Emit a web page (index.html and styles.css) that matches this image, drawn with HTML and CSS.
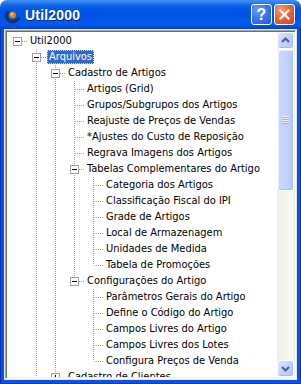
FILE: index.html
```html
<!DOCTYPE html>
<html lang="pt">
<head>
<meta charset="utf-8">
<title>Util2000</title>
<link rel="stylesheet" href="styles.css">
</head>
<body>
<div class="window">
  <div class="titlebar">
    <svg class="appicon" width="16" height="16" viewBox="0 0 16 16" aria-hidden="true">
      <path d="M3.2 4.4 A6 6 0 1 0 14.2 10.6" fill="none" stroke="#1b2f6b" stroke-width="3.2" stroke-linecap="round"/>
      <circle cx="8.6" cy="7" r="3.2" fill="#ef8618"/>
      <circle cx="7.7" cy="6.1" r="1.2" fill="#ffc978"/>
    </svg>
    <span class="title">Util2000</span>
    <span class="capbtn help">?</span>
    <span class="capbtn close">
      <svg width="19" height="19" viewBox="0 0 19 19" aria-hidden="true">
        <path d="M5.5 5.5 L13.5 13.5 M13.5 5.5 L5.5 13.5" stroke="#fff" stroke-width="2.2" stroke-linecap="square"/>
      </svg>
    </span>
  </div>
  <div class="frame">
    <div class="client">
      <div class="tree">
        <div class="rows">
          <div class="row"><span class="c solo"><span class="box"></span></span><span class="lbl">Util2000</span></div>
          <div class="row"><span class="g"></span><span class="c tee"><span class="box"></span></span><span class="lbl sel">Arquivos</span></div>
          <div class="row"><span class="g"></span><span class="g v"></span><span class="c tee"><span class="box"></span></span><span class="lbl">Cadastro de Artigos</span></div>
          <div class="row"><span class="g"></span><span class="g v"></span><span class="g v"></span><span class="c tee"></span><span class="lbl">Artigos (Grid)</span></div>
          <div class="row"><span class="g"></span><span class="g v"></span><span class="g v"></span><span class="c tee"></span><span class="lbl">Grupos/Subgrupos dos Artigos</span></div>
          <div class="row"><span class="g"></span><span class="g v"></span><span class="g v"></span><span class="c tee"></span><span class="lbl">Reajuste de Preços de Vendas</span></div>
          <div class="row"><span class="g"></span><span class="g v"></span><span class="g v"></span><span class="c tee"></span><span class="lbl">*Ajustes do Custo de Reposição</span></div>
          <div class="row"><span class="g"></span><span class="g v"></span><span class="g v"></span><span class="c tee"></span><span class="lbl">Regrava Imagens dos Artigos</span></div>
          <div class="row"><span class="g"></span><span class="g v"></span><span class="g v"></span><span class="c tee"><span class="box"></span></span><span class="lbl">Tabelas Complementares do Artigo</span></div>
          <div class="row"><span class="g"></span><span class="g v"></span><span class="g v"></span><span class="g v"></span><span class="c tee"></span><span class="lbl">Categoria dos Artigos</span></div>
          <div class="row"><span class="g"></span><span class="g v"></span><span class="g v"></span><span class="g v"></span><span class="c tee"></span><span class="lbl">Classificação Fiscal do IPI</span></div>
          <div class="row"><span class="g"></span><span class="g v"></span><span class="g v"></span><span class="g v"></span><span class="c tee"></span><span class="lbl">Grade de Artigos</span></div>
          <div class="row"><span class="g"></span><span class="g v"></span><span class="g v"></span><span class="g v"></span><span class="c tee"></span><span class="lbl">Local de Armazenagem</span></div>
          <div class="row"><span class="g"></span><span class="g v"></span><span class="g v"></span><span class="g v"></span><span class="c tee"></span><span class="lbl">Unidades de Medida</span></div>
          <div class="row"><span class="g"></span><span class="g v"></span><span class="g v"></span><span class="g v"></span><span class="c end"></span><span class="lbl">Tabela de Promoções</span></div>
          <div class="row"><span class="g"></span><span class="g v"></span><span class="g v"></span><span class="c end"><span class="box"></span></span><span class="lbl">Configurações do Artigo</span></div>
          <div class="row"><span class="g"></span><span class="g v"></span><span class="g v"></span><span class="g"></span><span class="c tee"></span><span class="lbl">Parâmetros Gerais do Artigo</span></div>
          <div class="row"><span class="g"></span><span class="g v"></span><span class="g v"></span><span class="g"></span><span class="c tee"></span><span class="lbl">Define o Código do Artigo</span></div>
          <div class="row"><span class="g"></span><span class="g v"></span><span class="g v"></span><span class="g"></span><span class="c tee"></span><span class="lbl">Campos Livres do Artigo</span></div>
          <div class="row"><span class="g"></span><span class="g v"></span><span class="g v"></span><span class="g"></span><span class="c tee"></span><span class="lbl">Campos Livres dos Lotes</span></div>
          <div class="row"><span class="g"></span><span class="g v"></span><span class="g v"></span><span class="g"></span><span class="c end"></span><span class="lbl">Configura Preços de Venda</span></div>
          <div class="row"><span class="g"></span><span class="g v"></span><span class="c tee"><span class="box plus"></span></span><span class="lbl">Cadastro de Clientes</span></div>
        </div>
        <div class="vscroll">
          <div class="sbtn">
            <svg width="15" height="15" viewBox="0 0 15 15" aria-hidden="true"><path d="M4 9 L7.5 5.5 L11 9" fill="none" stroke="#4d6185" stroke-width="2"/></svg>
          </div>
          <div class="track">
            <div class="thumb"><span class="grip"></span></div>
          </div>
          <div class="sbtn">
            <svg width="15" height="15" viewBox="0 0 15 15" aria-hidden="true"><path d="M4 6 L7.5 9.5 L11 6" fill="none" stroke="#4d6185" stroke-width="2"/></svg>
          </div>
        </div>
      </div>
    </div>
  </div>
</div>
</body>
</html>
```

FILE: styles.css
```css
html, body {
  margin: 0;
  padding: 0;
  background: #ffffff;
}

.window {
  width: 301px;
  height: 384px;
  display: flex;
  flex-direction: column;
  font-family: "DejaVu Sans Condensed", "Liberation Sans", sans-serif;
  font-size: 11px;
}

/* ---------- title bar ---------- */
.titlebar {
  flex: none;
  height: 29px;
  display: flex;
  align-items: center;
  padding: 0 6px 0 4px;
  border-radius: 7px 7px 0 0;
  background: linear-gradient(to bottom,
    #3d8ef5 0px, #3284f2 2px, #1068e6 5px, #0058e6 9px,
    #0054e3 15px, #0057e8 20px, #005cef 24px, #0049d6 27px, #003fc2 29px);
}

.appicon {
  flex: none;
  margin-top: 2px;
}

.title {
  margin-left: 5px;
  color: #ffffff;
  font-family: "Liberation Sans", "DejaVu Sans", sans-serif;
  font-weight: bold;
  font-size: 14px;
  letter-spacing: 0.2px;
  text-shadow: 1px 1px 0 #0a2a8c;
}

.capbtn {
  flex: none;
  width: 21px;
  height: 21px;
  box-sizing: border-box;
  border: 1px solid #ffffff;
  border-radius: 3px;
  display: flex;
  align-items: center;
  justify-content: center;
  color: #ffffff;
}

.help {
  margin-left: auto;
  font-family: "Liberation Sans", sans-serif;
  font-weight: bold;
  font-size: 16px;
  line-height: 19px;
  background: radial-gradient(circle at 30% 25%, #6a9cf7 0%, #3a76ee 45%, #1f5ddc 100%);
}

.close {
  margin-left: 2px;
  background: radial-gradient(circle at 30% 25%, #f29c7e 0%, #e4643f 45%, #cc4520 100%);
}

/* ---------- frame / client ---------- */
.frame {
  flex: 1;
  display: flex;
  min-height: 0;
  background: #0855dd;
  padding: 0 3px 3px;
  border: 1px solid #0031b8;
  border-top: none;
}

.client {
  flex: 1;
  display: flex;
  min-height: 0;
  background: #ece9d8;
  padding: 1px;
}

.tree {
  flex: 1;
  display: flex;
  min-height: 0;
  padding: 1px;
  border: 1px solid;
  border-color: #aca899 #ffffff #ffffff #aca899;
  box-shadow: inset 1px 1px 0 #716f64, inset -1px -1px 0 #f1efe2;
}

.rows {
  flex: 1;
  min-width: 0;
  overflow: hidden;
  background: #ffffff;
  padding-top: 1px;
}

/* ---------- tree rows ---------- */
.row {
  display: flex;
  height: 16px;
  white-space: nowrap;
  color: #000000;
}

.g {
  flex: none;
  width: 19px;
  height: 16px;
}

.g.v {
  background: repeating-linear-gradient(to bottom, #a0a0a0 0 1px, transparent 1px 2px) 10px 0 / 1px 16px no-repeat;
}

.c {
  flex: none;
  width: 21px;
  height: 16px;
  background:
    repeating-linear-gradient(to right, #a0a0a0 0 1px, transparent 1px 2px) 11px 8px / 10px 1px no-repeat;
}

.c.tee {
  background:
    repeating-linear-gradient(to right, #a0a0a0 0 1px, transparent 1px 2px) 11px 8px / 10px 1px no-repeat,
    repeating-linear-gradient(to bottom, #a0a0a0 0 1px, transparent 1px 2px) 10px 0 / 1px 16px no-repeat;
}

.c.end {
  background:
    repeating-linear-gradient(to right, #a0a0a0 0 1px, transparent 1px 2px) 11px 8px / 10px 1px no-repeat,
    repeating-linear-gradient(to bottom, #a0a0a0 0 1px, transparent 1px 2px) 10px 0 / 1px 8px no-repeat;
}

.box {
  display: block;
  width: 9px;
  height: 9px;
  box-sizing: border-box;
  margin: 4px 0 0 6px;
  border: 1px solid #a0a0a0;
  background:
    linear-gradient(#000000, #000000) 1px 3px / 5px 1px no-repeat,
    #ffffff;
}

.box.plus {
  background:
    linear-gradient(#000000, #000000) 1px 3px / 5px 1px no-repeat,
    linear-gradient(#000000, #000000) 3px 1px / 1px 5px no-repeat,
    #ffffff;
}

.lbl {
  flex: none;
  margin-top: 1px;
  height: 14px;
  line-height: 14px;
  padding: 0 2px;
}

.sel {
  background: #316ac5;
  color: #ffffff;
  outline: 1px dotted #c8d6f0;
  outline-offset: -1px;
}

/* ---------- scrollbar ---------- */
.vscroll {
  flex: none;
  width: 17px;
  display: flex;
  flex-direction: column;
  background: linear-gradient(to right, #efeee7, #fbfbf8);
}

.sbtn {
  flex: none;
  width: 17px;
  height: 17px;
  box-sizing: border-box;
  border: 1px solid #ffffff;
  border-radius: 3px;
  background: linear-gradient(135deg, #dbe6fe 0%, #c3d4fc 50%, #b1c6f6 100%);
  box-shadow: inset -1px -1px 0 #a7bcec;
  display: flex;
  align-items: center;
  justify-content: center;
}

.track {
  flex: 1;
  display: flex;
  flex-direction: column;
}

.thumb {
  flex: none;
  height: 142px;
  box-sizing: border-box;
  border: 1px solid #ffffff;
  border-radius: 3px;
  background: linear-gradient(to right, #cad8fd 0%, #c3d3fd 50%, #b6c9f9 100%);
  box-shadow: inset -1px -1px 0 #a8bcee, inset 1px 1px 0 #e4ecff;
  display: flex;
  align-items: center;
  justify-content: center;
}

.grip {
  display: block;
  width: 7px;
  height: 8px;
  background: repeating-linear-gradient(to bottom, #eef4fe 0 1px, #8fb0f0 1px 2px);
}
```
